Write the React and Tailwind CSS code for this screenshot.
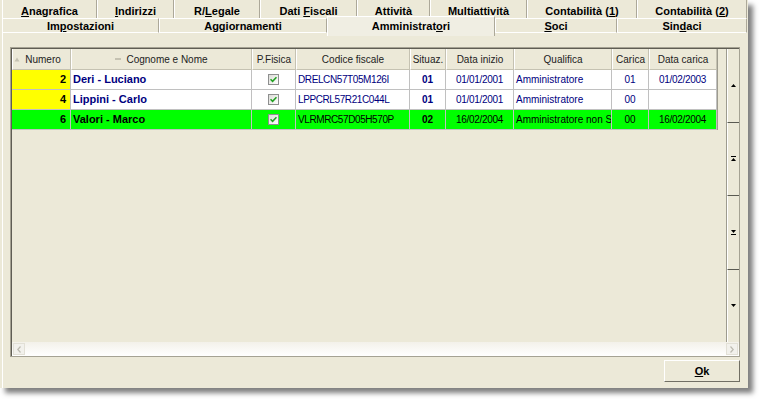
import React from "react";

// Tab strip: two rows, widths read from the screenshot
const tabsTop = [
  { w: 95, label: ["", "A", "nagrafica"] },
  { w: 77, label: ["", "I", "ndirizzi"] },
  { w: 86, label: ["R/", "L", "egale"] },
  { w: 97, label: ["Dati ", "F", "iscali"] },
  { w: 73, label: ["A", "t", "tività"] },
  { w: 97, label: ["M", "u", "ltiattività"] },
  { w: 110, label: ["Contabilità (", "1", ")"] },
  { w: 110, label: ["Contabilità (", "2", ")"] },
];

const tabsBottom = [
  { w: 157, label: ["Im", "p", "ostazioni"] },
  { w: 168, label: ["Aggiornamenti", "", ""] },
  { w: 168, label: ["Amministrat", "o", "ri"], active: true },
  { w: 122, label: ["", "S", "oci"] },
  { w: 130, label: ["Sin", "d", "aci"] },
];

const cols = [
  { key: "num", title: "Numero", w: 60 },
  { key: "name", title: "Cognome e Nome", w: 181 },
  { key: "pf", title: "P.Fisica", w: 44 },
  { key: "cf", title: "Codice fiscale", w: 114 },
  { key: "sit", title: "Situaz.", w: 36 },
  { key: "dini", title: "Data inizio", w: 68 },
  { key: "qual", title: "Qualifica", w: 98 },
  { key: "car", title: "Carica", w: 37 },
  { key: "dcar", title: "Data carica", w: 68 },
];

const rows = [
  {
    num: "2",
    name: "Deri - Luciano",
    cf: "DRELCN57T05M126I",
    sit: "01",
    dini: "01/01/2001",
    qual: "Amministratore",
    car: "01",
    dcar: "01/02/2003",
  },
  {
    num: "4",
    name: "Lippini - Carlo",
    cf: "LPPCRL57R21C044L",
    sit: "01",
    dini: "01/01/2001",
    qual: "Amministratore",
    car: "00",
    dcar: "",
  },
  {
    num: "6",
    name: "Valori - Marco",
    cf: "VLRMRC57D05H570P",
    sit: "02",
    dini: "16/02/2004",
    qual: "Amministratore non Socio",
    car: "00",
    dcar: "16/02/2004",
    selected: true,
  },
];

function Label({ parts }) {
  return (
    <span>
      {parts[0]}
      {parts[1] && <span className="underline underline-offset-1">{parts[1]}</span>}
      {parts[2]}
    </span>
  );
}

function CheckBox() {
  return (
    <div className="w-[11px] h-[11px] border border-[#8E8F8F] bg-gradient-to-br from-[#DCDCD7] to-white flex items-center justify-center">
      <svg width="7" height="7" viewBox="0 0 7 7">
        <path d="M0.5 3.2 L2.6 5.3 L6.5 1.2" stroke="#21A121" strokeWidth="1.6" fill="none" />
      </svg>
    </div>
  );
}

function StripButton({ children, last }) {
  return (
    <div
      className={`flex-1 flex items-center justify-center border-l border-white ${
        last ? "" : "border-b border-b-[#5A5A52]"
      }`}
    >
      {children}
    </div>
  );
}

export default function App() {
  return (
    <div className="w-[759px] h-[399px] bg-white overflow-hidden font-['Liberation_Sans',Arial,sans-serif] text-black">
      <div className="w-[748px] h-[388px] bg-[#ECE9D8] shadow-[5px_5px_5px_rgba(0,0,0,0.5)] flex flex-col pl-[2px] pr-[1px]">
        {/* === TAB ROW 1 === */}
        <div className="flex h-[18px] shrink-0">
          {tabsTop.map((t, i) => (
            <div
              key={i}
              style={{ width: t.w }}
              className="flex items-center justify-center pt-[4px] border-l border-white border-r border-r-[#ACA899] text-[11px] font-bold leading-none"
            >
              <Label parts={t.label} />
            </div>
          ))}
        </div>

        {/* === TAB ROW 2 === */}
        <div className="flex h-[15px] shrink-0">
          {tabsBottom.map((t, i) => (
            <div
              key={i}
              style={{ width: t.w }}
              className={`flex justify-center text-[11px] font-bold leading-none border-t border-white border-l border-r border-r-[#ACA899] ${
                t.active
                  ? "relative z-10 -mt-[2px] h-[20px] bg-[#F0EEE3] items-start pt-[4px]"
                  : "items-center pt-[2px] border-b border-b-white"
              }`}
            >
              <Label parts={t.label} />
            </div>
          ))}
        </div>

        {/* === PANEL === */}
        <div className="flex-1 flex flex-col border-l border-white pl-[7px] pt-[14px]">
          <div className="w-[730px] h-[310px] border border-[#A5A293]">
            <div className="h-full flex flex-col border-t border-l border-[#5F5D54]">
              <div className="flex h-[293px]">
                {/* grid */}
                <div className="w-[714px] bg-[#ECE9D8] text-[10px]">
                  <div className="flex w-[706px] h-[21px] border-r border-[#9D9B8E]">
                    {cols.map((c, i) => (
                      <div
                        key={c.key}
                        style={{ width: i === 0 ? c.w - 1 : c.w }}
                        className="flex items-center justify-center gap-[5px] border-r border-b border-[#C5C2B2] border-l border-l-white text-[#222]"
                      >
                        {i === 0 && (
                          <svg width="6" height="5" viewBox="0 0 6 5" className="-ml-[8px]">
                            <path d="M3 0.5 L5.5 4.5 L0.5 4.5 Z" fill="#C5C2B2" />
                          </svg>
                        )}
                        {i === 1 && (
                          <svg width="6" height="3" viewBox="0 0 6 3">
                            <rect x="0" y="0" width="6" height="2" fill="#C5C2B2" />
                          </svg>
                        )}
                        <span>{c.title}</span>
                      </div>
                    ))}
                  </div>

                  {rows.map((r, ri) => {
                    const bg = r.selected ? "bg-[#00FF00]" : "bg-white";
                    const fg = r.selected ? "text-black" : "text-[#000080]";
                    const cell = "h-[20px] flex items-center border-r border-b border-[#C0C0C0] overflow-hidden whitespace-nowrap";
                    return (
                      <div key={ri} className="flex w-[706px] border-r border-[#9D9B8E]">
                        <div
                          style={{ width: 59 }}
                          className={`${cell} justify-end pr-[4px] font-bold text-[11px] ${
                            r.selected ? "bg-[#00FF00]" : "bg-[#FFFF00]"
                          }`}
                        >
                          {r.num}
                        </div>
                        <div style={{ width: 181 }} className={`${cell} ${bg} ${fg} pl-[2px] font-bold text-[11px]`}>
                          {r.name}
                        </div>
                        <div style={{ width: 44 }} className={`${cell} ${bg} justify-center`}>
                          <CheckBox />
                        </div>
                        <div style={{ width: 114 }} className={`${cell} ${bg} ${fg} pl-[2px] tracking-[-0.4px]`}>
                          {r.cf}
                        </div>
                        <div style={{ width: 36 }} className={`${cell} ${bg} ${fg} justify-center font-bold`}>
                          {r.sit}
                        </div>
                        <div style={{ width: 68 }} className={`${cell} ${bg} ${fg} justify-center tracking-[-0.3px]`}>
                          {r.dini}
                        </div>
                        <div style={{ width: 98 }} className={`${cell} ${bg} ${fg} pl-[2px]`}>
                          {r.qual}
                        </div>
                        <div style={{ width: 37 }} className={`${cell} ${bg} ${fg} justify-center`}>
                          {r.car}
                        </div>
                        <div style={{ width: 68 }} className={`${cell} ${bg} ${fg} justify-center tracking-[-0.3px]`}>
                          {r.dcar}
                        </div>
                      </div>
                    );
                  })}
                </div>

                {/* vertical navigation strip */}
                <div className="w-[13px] flex flex-col border-l border-[#9D9B8E] bg-[#ECE9D8]">
                  <StripButton>
                    <svg width="5" height="3" viewBox="0 0 5 3">
                      <path d="M2.5 0 L5 3 L0 3 Z" fill="#000" />
                    </svg>
                  </StripButton>
                  <StripButton>
                    <svg width="5" height="5" viewBox="0 0 5 5">
                      <rect x="0" y="0" width="5" height="1" fill="#000" />
                      <path d="M2.5 2 L5 5 L0 5 Z" fill="#000" />
                    </svg>
                  </StripButton>
                  <StripButton>
                    <svg width="5" height="5" viewBox="0 0 5 5">
                      <path d="M0 0 L5 0 L2.5 3 Z" fill="#000" />
                      <rect x="0" y="4" width="5" height="1" fill="#000" />
                    </svg>
                  </StripButton>
                  <StripButton last>
                    <svg width="5" height="3" viewBox="0 0 5 3">
                      <path d="M0 0 L5 0 L2.5 3 Z" fill="#000" />
                    </svg>
                  </StripButton>
                </div>
              </div>

              {/* horizontal scrollbar */}
              <div className="h-[14px] flex items-center justify-between px-[1px] bg-gradient-to-b from-[#F3F1EA] to-white">
                <div className="w-[12px] h-[12px] border border-[#E2E0D6] bg-[#F2F1EC] flex items-center justify-center">
                  <svg width="4" height="7" viewBox="0 0 4 7">
                    <path d="M3.5 0.5 L0.8 3.5 L3.5 6.5" stroke="#BDBBB1" strokeWidth="1.2" fill="none" />
                  </svg>
                </div>
                <div className="w-[12px] h-[12px] border border-[#E2E0D6] bg-[#F2F1EC] flex items-center justify-center">
                  <svg width="4" height="7" viewBox="0 0 4 7">
                    <path d="M0.5 0.5 L3.2 3.5 L0.5 6.5" stroke="#BDBBB1" strokeWidth="1.2" fill="none" />
                  </svg>
                </div>
              </div>
            </div>
          </div>

          {/* Ok button */}
          <div className="w-[730px] flex justify-end mt-[3px]">
            <button className="w-[76px] h-[22px] border border-t-white border-l-white border-r-[#716F64] border-b-[#716F64] bg-[#ECE9D8] text-[11px] font-bold leading-none">
              <span className="underline underline-offset-1">O</span>k
            </button>
          </div>
        </div>
      </div>
    </div>
  );
}
